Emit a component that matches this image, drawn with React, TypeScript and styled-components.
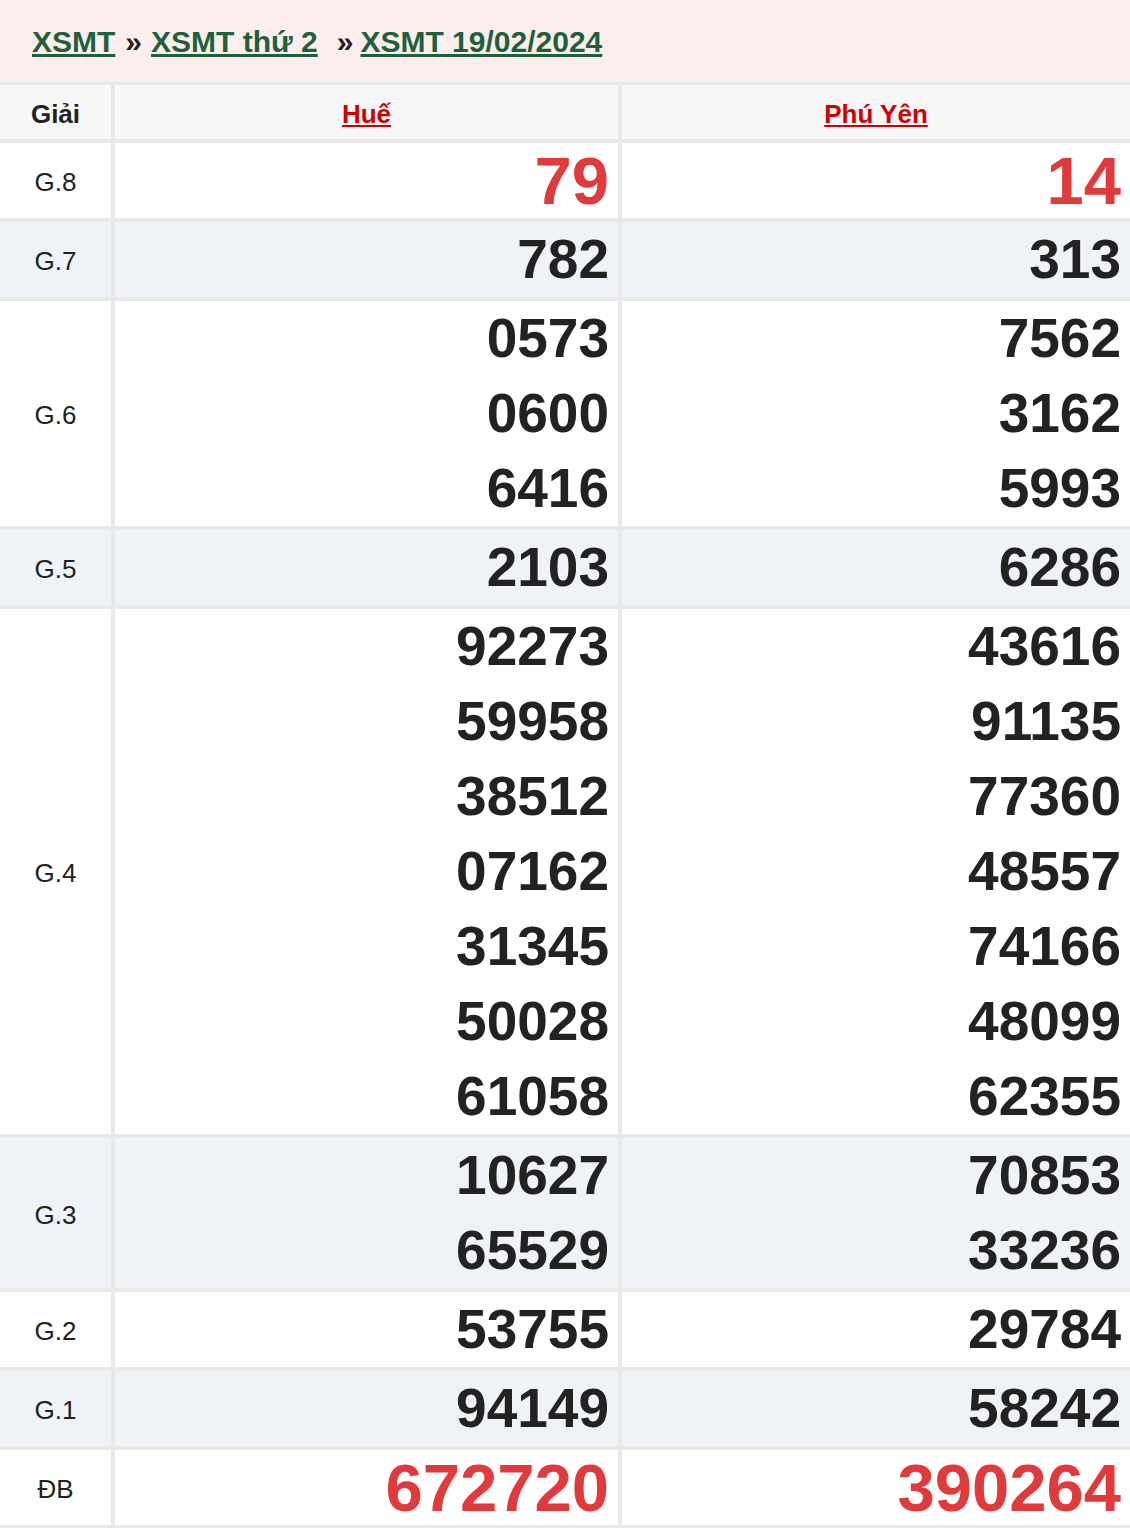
import styled, { createGlobalStyle } from 'styled-components';

type Row = {
  label: string;
  hue: string[];
  phuYen: string[];
  red?: boolean;
};

const rows: Row[] = [
  { label: 'G.8', hue: ['79'], phuYen: ['14'], red: true },
  { label: 'G.7', hue: ['782'], phuYen: ['313'] },
  { label: 'G.6', hue: ['0573', '0600', '6416'], phuYen: ['7562', '3162', '5993'] },
  { label: 'G.5', hue: ['2103'], phuYen: ['6286'] },
  {
    label: 'G.4',
    hue: ['92273', '59958', '38512', '07162', '31345', '50028', '61058'],
    phuYen: ['43616', '91135', '77360', '48557', '74166', '48099', '62355'],
  },
  { label: 'G.3', hue: ['10627', '65529'], phuYen: ['70853', '33236'] },
  { label: 'G.2', hue: ['53755'], phuYen: ['29784'] },
  { label: 'G.1', hue: ['94149'], phuYen: ['58242'] },
  { label: 'ĐB', hue: ['672720'], phuYen: ['390264'], red: true },
];

function App() {
  return (
    <>
      <GlobalStyle />
      <StyledPage>
        <StyledBreadcrumb>
          <StyledCrumb href="#">XSMT</StyledCrumb>
          <StyledSep>»</StyledSep>
          <StyledCrumb href="#">XSMT thứ 2</StyledCrumb>
          <StyledSep $wide>»</StyledSep>
          <StyledCrumb href="#">XSMT 19/02/2024</StyledCrumb>
        </StyledBreadcrumb>

        <StyledBoard>
          <StyledHeadCell>Giải</StyledHeadCell>
          <StyledHeadCell>
            <StyledProvince href="#">Huế</StyledProvince>
          </StyledHeadCell>
          <StyledHeadCell>
            <StyledProvince href="#">Phú Yên</StyledProvince>
          </StyledHeadCell>

          {rows.map((row, i) => {
            const alt = i % 2 === 1;
            return [
              <StyledPrizeCell key={row.label + '-l'} $alt={alt}>
                {row.label}
              </StyledPrizeCell>,
              <StyledNumCell key={row.label + '-h'} $alt={alt}>
                {row.hue.map((n) => (
                  <StyledNum key={n} $red={row.red}>
                    {n}
                  </StyledNum>
                ))}
              </StyledNumCell>,
              <StyledNumCell key={row.label + '-p'} $alt={alt}>
                {row.phuYen.map((n) => (
                  <StyledNum key={n} $red={row.red}>
                    {n}
                  </StyledNum>
                ))}
              </StyledNumCell>,
            ];
          })}
        </StyledBoard>
      </StyledPage>
    </>
  );
}

export default App;

const GlobalStyle = createGlobalStyle`
  body {
    margin: 0;
    background: #fff;
    font-family: "Liberation Sans", Arial, sans-serif;
  }
`;

const StyledPage = styled.div`
  width: 1130px;
`;

const StyledBreadcrumb = styled.div`
  height: 82px;
  background-color: #fdeeee;
  display: flex;
  flex-direction: row;
  align-items: center;
  padding: 2px 0 0 32px;
  box-sizing: border-box;
  font-size: 30px;
  font-weight: bold;
`;

const StyledCrumb = styled.a`
  color: #1f5f3b;
  text-decoration: underline;
  text-underline-offset: 2px;
`;

const StyledSep = styled.span<{ $wide?: boolean }>`
  color: #222;
  margin: 0 ${(props) => (props.$wide ? '7px' : '9px')} 0
    ${(props) => (props.$wide ? '19px' : '10px')};
`;

const StyledBoard = styled.div`
  display: grid;
  grid-template-columns: 111px 503px 1fr;
  gap: 4px;
  background-color: #e9e9e9;
  padding: 3px 0 4px 0;
`;

const StyledHeadCell = styled.div`
  height: 54px;
  box-sizing: border-box;
  padding-top: 5px;
  background-color: #f8f8f8;
  display: flex;
  align-items: center;
  justify-content: center;
  font-size: 26px;
  font-weight: bold;
  color: #222;
`;

const StyledProvince = styled.a`
  color: #d00000;
  text-decoration: underline;
`;

const StyledPrizeCell = styled.div<{ $alt: boolean }>`
  background-color: ${(props) => (props.$alt ? '#eff2f7' : '#fff')};
  display: flex;
  align-items: center;
  justify-content: center;
  padding-top: 4px;
  font-size: 26px;
  color: #222;
`;

const StyledNumCell = styled.div<{ $alt: boolean }>`
  background-color: ${(props) => (props.$alt ? '#eff2f7' : '#fff')};
  display: flex;
  flex-direction: column;
  align-items: flex-end;
  padding-right: 9px;
`;

const StyledNum = styled.div<{ $red?: boolean }>`
  height: 75px;
  line-height: 75px;
  font-weight: bold;
  font-size: ${(props) => (props.$red ? '67px' : '55px')};
  color: ${(props) => (props.$red ? '#e03a3c' : '#222')};
`;
